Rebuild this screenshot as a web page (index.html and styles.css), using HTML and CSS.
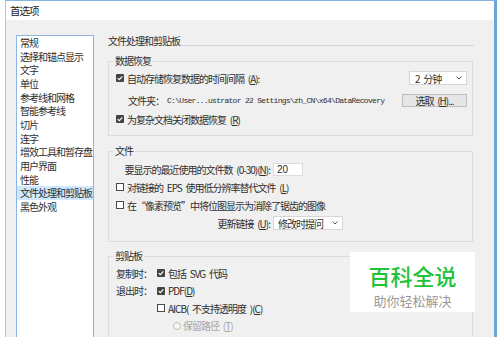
FILE: index.html
```html
<!DOCTYPE html>
<html lang="zh-CN">
<head>
<meta charset="utf-8">
<title>首选项</title>
<link rel="stylesheet" href="styles.css">
</head>
<body>
<div class="window">
  <div class="titlebar">首选项</div>
  <div class="content">
    <ul class="nav">
      <li>常规</li>
      <li>选择和锚点显示</li>
      <li>文字</li>
      <li>单位</li>
      <li>参考线和网格</li>
      <li>智能参考线</li>
      <li>切片</li>
      <li>连字</li>
      <li>增效工具和暂存盘</li>
      <li>用户界面</li>
      <li>性能</li>
      <li class="active">文件处理和剪贴板</li>
      <li>黑色外观</li>
    </ul>
    <div class="panel">
      <div class="heading">文件处理和剪贴板</div>

      <fieldset class="group g-recovery">
        <legend>数据恢复</legend>
        <div class="row">
          <svg class="cb" viewBox="0 0 8 8" width="8" height="8"><rect width="8" height="8" rx="1" fill="#444"/><path d="M1.7 4.1 3.3 5.7 6.4 2.3" fill="none" stroke="#fff" stroke-width="1.2"/></svg>
          <span>自动存储恢复数据的时间间隔 (<u>A</u>):</span>
          <span class="select sel-minutes">2 分钟<svg class="chev" viewBox="0 0 6 4" width="6" height="4"><path d="M.5 .5 3 3 5.5 .5" fill="none" stroke="#555" stroke-width="1"/></svg></span>
        </div>
        <div class="row folder">
          <span>文件夹：</span>
          <span class="path">C:\User...ustrator 22 Settings\zh_CN\x64\DataRecovery</span>
          <span class="button">选取 (<u>H</u>)...</span>
        </div>
        <div class="row after-folder">
          <svg class="cb" viewBox="0 0 8 8" width="8" height="8"><rect width="8" height="8" rx="1" fill="#444"/><path d="M1.7 4.1 3.3 5.7 6.4 2.3" fill="none" stroke="#fff" stroke-width="1.2"/></svg>
          <span>为复杂文档关闭数据恢复 (<u>R</u>)</span>
        </div>
      </fieldset>

      <fieldset class="group g-files">
        <legend>文件</legend>
        <div class="row">
          <span class="label-col">要显示的最近使用的文件数 (0-30)(<u>N</u>):</span>
          <span class="input">20</span>
        </div>
        <div class="row">
          <span class="cb off"></span>
          <span>对链接的 EPS 使用低分辨率替代文件 (<u>L</u>)</span>
        </div>
        <div class="row">
          <span class="cb off"></span>
          <span>在“像素预览”中将位图显示为消除了锯齿的图像</span>
        </div>
        <div class="row">
          <span class="label-col">更新链接 (<u>U</u>):</span>
          <span class="select sel-links">修改时提问<svg class="chev" viewBox="0 0 6 4" width="6" height="4"><path d="M.5 .5 3 3 5.5 .5" fill="none" stroke="#555" stroke-width="1"/></svg></span>
        </div>
      </fieldset>

      <fieldset class="group g-clip">
        <legend>剪贴板</legend>
        <div class="row">
          <span class="clip-label">复制时：</span>
          <svg class="cb" viewBox="0 0 8 8" width="8" height="8"><rect width="8" height="8" rx="1" fill="#444"/><path d="M1.7 4.1 3.3 5.7 6.4 2.3" fill="none" stroke="#fff" stroke-width="1.2"/></svg>
          <span>包括 SVG 代码</span>
        </div>
        <div class="row">
          <span class="clip-label">退出时：</span>
          <svg class="cb" viewBox="0 0 8 8" width="8" height="8"><rect width="8" height="8" rx="1" fill="#444"/><path d="M1.7 4.1 3.3 5.7 6.4 2.3" fill="none" stroke="#fff" stroke-width="1.2"/></svg>
          <span>PDF(<u>D</u>)</span>
        </div>
        <div class="row indent">
          <span class="cb off"></span>
          <span>AICB( 不支持透明度 )(<u>C</u>)</span>
        </div>
        <div class="row indent-radio disabled">
          <svg class="radio" viewBox="0 0 8 8" width="8" height="8"><circle cx="4" cy="4" r="3.5" fill="#f7f7f7" stroke="#bdbdbd" stroke-width="1"/></svg>
          <span>保留路径 (<u>T</u>)</span>
        </div>
      </fieldset>
    </div>
  </div>
</div>
<div class="watermark">
  <div class="wm-title">百科全说</div>
  <div class="wm-sub">助你轻松解决</div>
</div>
</body>
</html>
```

FILE: styles.css
```css
* { box-sizing: border-box; }
html, body { margin: 0; padding: 0; }
body {
  width: 500px;
  height: 337px;
  overflow: hidden;
  background: #fff;
  font-family: "Noto Sans CJK SC", "Noto Sans", sans-serif;
  font-size: 10px;
  letter-spacing: -1px;
  word-spacing: 2.5px;
  color: #2e2e2e;
  position: relative;
}
.window {
  margin-left: 5px;
  width: 492px;
  height: 340px;
  border-top: 1px solid #86b2e6;
  border-left: 1px solid #a9c4e4;
  border-right: 3px solid #6fa3df;
  background: #f0f0f0;
  display: flex;
  flex-direction: column;
}
.titlebar {
  height: 20px;
  line-height: 19px;
  padding-left: 4px;
  background: #fff;
  font-size: 10.5px;
  color: #222;
}
.content {
  flex: 1;
  display: flex;
  gap: 14px;
  padding: 15px 21px 0 10px;
}
.nav {
  width: 78px;
  height: 320px;
  margin: 0;
  padding: 0;
  list-style: none;
  background: #fff;
  border: 1px solid #8db6e6;
  flex: none;
}
.nav li {
  height: 13.68px;
  line-height: 13.68px;
  padding-left: 3px;
  white-space: nowrap;
}
.nav li.active { background: #cde8ff; }
.panel {
  flex: 1;
  min-width: 0;
  display: flex;
  flex-direction: column;
}
.heading {
  height: 10px;
  line-height: 11px;
  border-bottom: 1px solid #d6d6d6;
  box-sizing: content-box;
  margin-right: -1px;
}
.group {
  margin: 0;
  min-width: 0;
  border: 1px solid #dcdcdc;
  padding: 4px 5px 9px 7px;
  display: flex;
  flex-direction: column;
}
.group legend {
  padding: 0 2px;
  margin-left: -3px;
  height: 12px;
  line-height: 12px;
}
.g-recovery { margin-top: 9px; }
.g-files { margin-top: 9px; padding-top: 5px; padding-bottom: 11px; gap: 4px; }
.g-clip { margin-top: 8px; padding-top: 4px; gap: 3.5px; }
.row {
  display: flex;
  align-items: center;
  height: 14px;
  white-space: nowrap;
}
.row.folder { margin-top: 8px; padding-left: 12px; }
.row.after-folder { margin-top: 5px; }
.cb {
  flex: none;
  width: 8px;
  height: 8px;
  margin-right: 3px;
}
.cb.off {
  display: inline-block;
  border: 1px solid #4a4a4a;
  background: #fff;
}
.radio { flex: none; margin-right: 2px; }
.select {
  display: flex;
  align-items: center;
  justify-content: space-between;
  height: 14px;
  background: #fff;
  border: 1px solid #d6d6d6;
  padding: 0 4px 0 5px;
}
.sel-minutes { width: 58px; margin-left: auto; }
.sel-links { width: 70px; padding-left: 4px; }
.chev { flex: none; }
.path {
  margin-left: 3px;
  font-family: "Liberation Mono", monospace;
  font-size: 8px;
  letter-spacing: -0.7px;
  word-spacing: 0;
}
.button {
  margin-left: auto;
  width: 65px;
  height: 13px;
  line-height: 11px;
  text-align: center;
  background: #e6e6e6;
  border: 1px solid #bdbdbd;
}
.label-col {
  width: 154px;
  margin-right: 3px;
  text-align: right;
  flex: none;
}
.input {
  width: 30px;
  height: 13px;
  line-height: 11px;
  background: #fff;
  border: 1px solid #dcdcdc;
  padding-left: 3px;
  font-family: "Liberation Sans", sans-serif;
  letter-spacing: 0;
}
.clip-label { width: 41px; flex: none; }
.row.indent { padding-left: 41px; }
.row.indent-radio { padding-left: 57px; }
.disabled { color: #a6a6a6; }
.watermark {
  position: absolute;
  left: 350px;
  top: 252px;
  width: 125px;
  height: 60px;
  background: #fff;
  display: flex;
  flex-direction: column;
  align-items: center;
  padding-top: 12px;
  letter-spacing: 0;
  word-spacing: 0;
}
.wm-title {
  font-size: 22px;
  line-height: 22px;
  color: #1fc33a;
  font-weight: 500;
}
.wm-sub {
  margin-top: 7px;
  font-size: 13px;
  line-height: 16px;
  color: #9a9a9a;
}
```
